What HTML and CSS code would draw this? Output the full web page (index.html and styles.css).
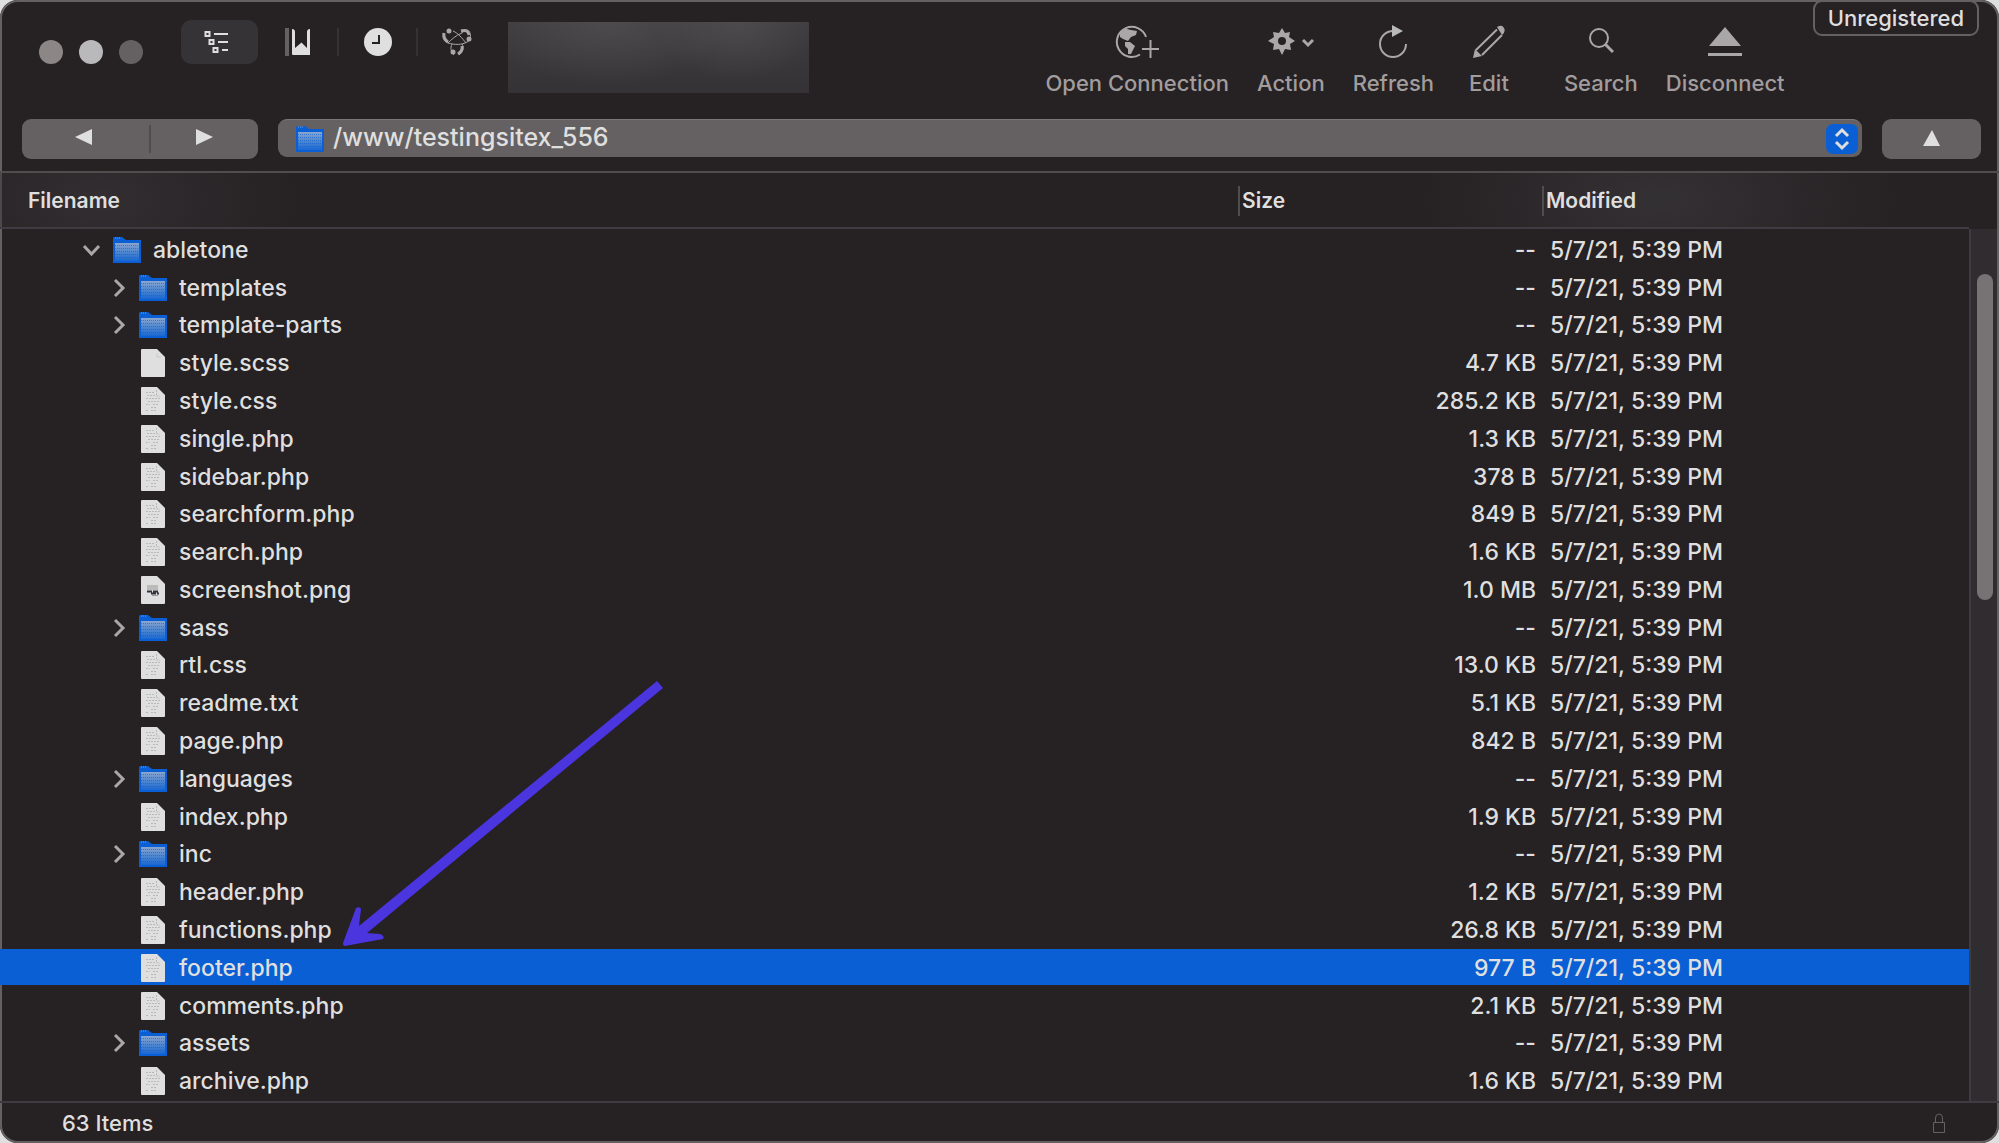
FILE: index.html
```html
<!DOCTYPE html>
<html lang="en">
<head>
<meta charset="utf-8">
<title>/www/testingsitex_556</title>
<link rel="stylesheet" href="styles.css">
</head>
<body>
<svg class="defs" aria-hidden="true">
  <defs>
    <linearGradient id="folder-face" x1="0" y1="0" x2="0" y2="1">
      <stop offset="0" stop-color="#8ba6cf"/>
      <stop offset="0.5" stop-color="#4f87cf"/>
      <stop offset="1" stop-color="#1a67d2"/>
    </linearGradient>
    <symbol id="folder" viewBox="0 0 28 26">
      <path d="M0 1.500Q0 0 1.500 0H9L13 3H28V26H0Z" fill="#0a5fd4"/>
      <path d="M2 1H8" stroke="#7fa3d6" stroke-dasharray="1 1"/>
      <path d="M2 6H26V24H2Z" fill="url(#folder-face)"/>
      <path d="M2 8.500H26M2 11.500H26M2 14.500H26M2 17.500H26M2 20.500H26" stroke="#0a5fd4" stroke-dasharray="1 1" opacity="0.6"/>
    </symbol>
    <symbol id="blank" viewBox="0 0 28 28">
      <path d="M2 1Q2 0 3 0H18L26 8V27Q26 28 25 28H3Q2 28 2 27Z" fill="#dfdfdf"/>
      <path d="M18 4.500V8H22" fill="none" stroke="#c8c8c8"/>
    </symbol>
    <symbol id="file" viewBox="0 0 28 28">
      <path d="M2 1Q2 0 3 0H18L26 8V27Q26 28 25 28H3Q2 28 2 27Z" fill="#dfdfdf"/>
      <path d="M17.500 3V9H21M7 5.500H15M8 8.500H16M7 11.500H21M9 14.500H20M7 17.500H11M14 17.500H20M12 20.500H17M7 23.500H9M12 23.500H18" fill="none" stroke="#b9b8ba" stroke-dasharray="2 1"/>
    </symbol>
    <symbol id="image" viewBox="0 0 28 28">
      <path d="M2 1Q2 0 3 0H18L26 8V27Q26 28 25 28H3Q2 28 2 27Z" fill="#dfdfdf"/>
      <path d="M8 9H19V14H8Z" fill="#bbb"/>
      <path d="M8 15.500H19M12 17.500H20" stroke="#33333a" stroke-width="2" stroke-dasharray="5 1"/>
      <path d="M13 19.500H19" stroke="#999"/>
    </symbol>
    <symbol id="closed" viewBox="0 0 22 22">
      <path d="M9 3L17 11L9 19" fill="none" stroke="#aaa7a8" stroke-width="3"/>
    </symbol>
    <symbol id="opened" viewBox="0 0 22 22">
      <path d="M4 7L11.500 15L19 7" fill="none" stroke="#aaa7a8" stroke-width="3"/>
    </symbol>
  </defs>
</svg>

<div class="window">
  <header class="chrome">
    <div class="toolbar">
      <div class="lights">
        <button class="light light-close" aria-label="Close"></button>
        <button class="light light-min" aria-label="Minimize"></button>
        <button class="light light-zoom" aria-label="Zoom"></button>
      </div>
      <nav class="views">
        <button class="view view-active" aria-label="Browser">
          <svg width="24" height="24" viewBox="0 0 24 24" fill="none" stroke="#dfdfdf" stroke-width="2"><path d="M1.500 2H5.500V6H1.500ZM5.500 10H9.500V14H5.500ZM9.500 18H13.500V22H9.500ZM10 4H24M14 12H24M18 20H24"/></svg>
        </button>
        <button class="view" aria-label="Bookmarks">
          <svg width="26" height="28" viewBox="0 0 26 28"><path d="M0 0H4V28H0Z" fill="#656162"/><path d="M7 1Q10 1 10 4V20L16.500 14.500L22 20V4Q22 1 25 1V27H8Q7 27 7 26Z" fill="#dfdfdf"/></svg>
        </button>
        <button class="view" aria-label="History">
          <svg width="28" height="28" viewBox="0 0 28 28"><circle cx="14" cy="14" r="14" fill="#dfdfdf"/><path d="M15 7V15H8" fill="none" stroke="#262123" stroke-width="2"/></svg>
        </button>
        <button class="view" aria-label="Bonjour">
          <svg width="30" height="28" viewBox="0 0 30 28" fill="none" stroke="#aaa7a8" stroke-width="2"><path d="M11 3C16 5 20 10 24 15M20 5C14 7 9 12 6 15M6 15C13 17 20 17 25 14M20 5C22 2 25 1 27 3C30 8 28 13 25 14M6 15C2 13 0 9 2 5M10 16C8 20 9 24 12 27M20 16C22 20 21 24 17 27" stroke-width="1"/><path d="M2 5Q1 11 6 14M19 3Q26 1 27 7M16 26Q21 23 20 18" stroke-width="3"/><circle cx="7" cy="3" r="2.500" fill="#aaa7a8" stroke="none"/><circle cx="27" cy="11" r="2.500" fill="#aaa7a8" stroke="none"/><circle cx="11" cy="24" r="2.500" fill="#aaa7a8" stroke="none"/></svg>
        </button>
      </nav>
      <div class="title-shade"></div>
      <div class="actions">
        <button class="action">
          <svg width="44" height="34" viewBox="0 0 44 34" fill="none" stroke="#aaa7a8" stroke-width="2"><path d="M31 12A15 15 0 1 0 25 29.500"/><path d="M27 24H44M35.500 15V33"/><path d="M5 8L10 3.500L16 5L22 6L21 10L16 12L13 16L8 14L5 12ZM10 17L15 17L20 21L18 25L16 29L13 29L13 24L10 21Z" fill="#aaa7a8" stroke="none"/></svg>
          <span>Open Connection</span>
        </button>
        <button class="action">
          <svg width="46" height="34" viewBox="0 0 46 34"><path fill-rule="evenodd" fill="#aaa7a8" d="M14 3L17 8L22 7L21 12L27 16L22 19L23 25L17 24L14 30L11 24L5 25L6 19L0 16L6 12L5 7L11 8ZM14 12A4 4 0 1 0 14 20A4 4 0 1 0 14 12Z"/><path d="M35 15L40 20L45 15" fill="none" stroke="#aaa7a8" stroke-width="3"/></svg>
          <span>Action</span>
        </button>
        <button class="action">
          <svg width="30" height="34" viewBox="0 0 30 34"><path d="M15 6A13 13 0 1 0 28 19" fill="none" stroke="#aaa7a8" stroke-width="2"/><path d="M14 0L25 6L14 12Z" fill="#b9b8ba"/></svg>
          <span>Refresh</span>
        </button>
        <button class="action action-edit">
          <svg width="34" height="34" viewBox="0 0 34 34"><path d="M4 25L25 4.500M10 30L30 10" fill="none" stroke="#aaa7a8" stroke-width="2"/><path d="M3 24L10 31L1 33ZM25 2Q30 -1 32 3Q34 7 30 10Z" fill="#aaa7a8"/></svg>
          <span>Edit</span>
        </button>
        <button class="action action-search">
          <svg width="26" height="34" viewBox="0 0 26 34" fill="none" stroke="#aaa7a8"><circle cx="11" cy="13" r="9" stroke-width="2"/><path d="M17 19L25 27" stroke-width="3"/></svg>
          <span>Search</span>
        </button>
        <button class="action">
          <svg width="34" height="34" viewBox="0 0 34 34" fill="#aaa7a8"><path d="M17 2L33 21H1ZM0 28H34V31H0Z"/></svg>
          <span>Disconnect</span>
        </button>
      </div>
      <button class="unregistered">Unregistered</button>
    </div>

    <div class="location">
      <div class="history">
        <button class="back" aria-label="Back"><svg width="17" height="16" viewBox="0 0 17 16"><path d="M17 0V16L0 8Z" fill="#dfdfdf"/></svg></button>
        <button class="forward" aria-label="Forward"><svg width="17" height="16" viewBox="0 0 17 16"><path d="M0 0V16L17 8Z" fill="#dfdfdf"/></svg></button>
      </div>
      <div class="path">
        <svg width="28" height="26"><use href="#folder"/></svg>
        <select aria-label="Path"><option>/www/testingsitex_556</option></select>
        <svg class="stepper" width="32" height="30" viewBox="0 0 32 30"><rect width="32" height="30" rx="7" fill="#0a5fd4"/><path d="M10 12L16 6L22 12M10 18L16 24L22 18" fill="none" stroke="#dfdfdf" stroke-width="3"/></svg>
      </div>
      <button class="up" aria-label="Parent folder"><svg width="17" height="16" viewBox="0 0 17 16"><path d="M0 16H17L9 0Z" fill="#dfdfdf"/></svg></button>
    </div>
  </header>

  <main class="browser">
    <table class="files">
      <thead>
        <tr><th>Filename</th><th>Size</th><th>Modified</th></tr>
      </thead>
      <tbody>
        <tr class="root"><td><button class="twist" aria-label="Collapse"><svg><use href="#opened"/></svg></button><svg class="icon"><use href="#folder"/></svg>abletone</td><td>--</td><td>5/7/21, 5:39 PM</td></tr>
        <tr><td><button class="twist" aria-label="Expand"><svg><use href="#closed"/></svg></button><svg class="icon"><use href="#folder"/></svg>templates</td><td>--</td><td>5/7/21, 5:39 PM</td></tr>
        <tr><td><button class="twist" aria-label="Expand"><svg><use href="#closed"/></svg></button><svg class="icon"><use href="#folder"/></svg>template-parts</td><td>--</td><td>5/7/21, 5:39 PM</td></tr>
        <tr><td><span class="twist"></span><svg class="icon"><use href="#blank"/></svg>style.scss</td><td>4.7 KB</td><td>5/7/21, 5:39 PM</td></tr>
        <tr><td><span class="twist"></span><svg class="icon"><use href="#file"/></svg>style.css</td><td>285.2 KB</td><td>5/7/21, 5:39 PM</td></tr>
        <tr><td><span class="twist"></span><svg class="icon"><use href="#file"/></svg>single.php</td><td>1.3 KB</td><td>5/7/21, 5:39 PM</td></tr>
        <tr><td><span class="twist"></span><svg class="icon"><use href="#file"/></svg>sidebar.php</td><td>378 B</td><td>5/7/21, 5:39 PM</td></tr>
        <tr><td><span class="twist"></span><svg class="icon"><use href="#file"/></svg>searchform.php</td><td>849 B</td><td>5/7/21, 5:39 PM</td></tr>
        <tr><td><span class="twist"></span><svg class="icon"><use href="#file"/></svg>search.php</td><td>1.6 KB</td><td>5/7/21, 5:39 PM</td></tr>
        <tr><td><span class="twist"></span><svg class="icon"><use href="#image"/></svg>screenshot.png</td><td>1.0 MB</td><td>5/7/21, 5:39 PM</td></tr>
        <tr><td><button class="twist" aria-label="Expand"><svg><use href="#closed"/></svg></button><svg class="icon"><use href="#folder"/></svg>sass</td><td>--</td><td>5/7/21, 5:39 PM</td></tr>
        <tr><td><span class="twist"></span><svg class="icon"><use href="#file"/></svg>rtl.css</td><td>13.0 KB</td><td>5/7/21, 5:39 PM</td></tr>
        <tr><td><span class="twist"></span><svg class="icon"><use href="#file"/></svg>readme.txt</td><td>5.1 KB</td><td>5/7/21, 5:39 PM</td></tr>
        <tr><td><span class="twist"></span><svg class="icon"><use href="#file"/></svg>page.php</td><td>842 B</td><td>5/7/21, 5:39 PM</td></tr>
        <tr><td><button class="twist" aria-label="Expand"><svg><use href="#closed"/></svg></button><svg class="icon"><use href="#folder"/></svg>languages</td><td>--</td><td>5/7/21, 5:39 PM</td></tr>
        <tr><td><span class="twist"></span><svg class="icon"><use href="#file"/></svg>index.php</td><td>1.9 KB</td><td>5/7/21, 5:39 PM</td></tr>
        <tr><td><button class="twist" aria-label="Expand"><svg><use href="#closed"/></svg></button><svg class="icon"><use href="#folder"/></svg>inc</td><td>--</td><td>5/7/21, 5:39 PM</td></tr>
        <tr><td><span class="twist"></span><svg class="icon"><use href="#file"/></svg>header.php</td><td>1.2 KB</td><td>5/7/21, 5:39 PM</td></tr>
        <tr><td><span class="twist"></span><svg class="icon"><use href="#file"/></svg>functions.php</td><td>26.8 KB</td><td>5/7/21, 5:39 PM</td></tr>
        <tr class="selected"><td><span class="twist"></span><svg class="icon"><use href="#file"/></svg>footer.php</td><td>977 B</td><td>5/7/21, 5:39 PM</td></tr>
        <tr><td><span class="twist"></span><svg class="icon"><use href="#file"/></svg>comments.php</td><td>2.1 KB</td><td>5/7/21, 5:39 PM</td></tr>
        <tr><td><button class="twist" aria-label="Expand"><svg><use href="#closed"/></svg></button><svg class="icon"><use href="#folder"/></svg>assets</td><td>--</td><td>5/7/21, 5:39 PM</td></tr>
        <tr><td><span class="twist"></span><svg class="icon"><use href="#file"/></svg>archive.php</td><td>1.6 KB</td><td>5/7/21, 5:39 PM</td></tr>
      </tbody>
    </table>
    <div class="scrollbar"><div class="thumb"></div></div>
    <svg class="pointer" width="322" height="268" viewBox="0 0 322 268" aria-hidden="true"><path d="M314 1L320 8L24 253L37 254Q42 256 40 259L2 266Q0 266 0 263L13 228Q17 226 18 229L16 246Z" fill="#4a35df"/></svg>
  </main>

  <footer class="status">
    <span>63 Items</span>
    <svg width="14" height="20" viewBox="0 0 14 20" fill="none" stroke="#656162" stroke-width="1"><path d="M1.500 9.500H12.500V19.500H1.500ZM3.500 9V5Q3.500 1 7 1T10.500 5V9"/></svg>
  </footer>
</div>
</body>
</html>
```
FILE: styles.css
```css
* {
  box-sizing: border-box;
}

body {
  margin: 0;
  background: #dfdfdf;
  color: #dfdfdf;
  font: 500 23px/30px Inter, "Liberation Sans", sans-serif;
}

button,
select {
  margin: 0;
  padding: 0;
  border: 0;
  background: none;
  color: inherit;
  font: inherit;
}

svg {
  display: block;
  flex: none;
}

.defs {
  position: absolute;
  width: 0;
  height: 0;
}

.window {
  display: flex;
  flex-direction: column;
  min-height: 100vh;
  border-radius: 18px;
  background: #262123;
  box-shadow: inset 0 0 0 2px #656162;
  overflow: hidden;
}

/* Toolbar */

.chrome {
  border-bottom: 2px solid #504d4f;
}

.toolbar {
  display: flex;
  align-items: flex-start;
  height: 119px;
  padding: 0 20px 0 39px;
}

.lights {
  display: flex;
  gap: 16px;
  padding-top: 40px;
}

.light {
  width: 24px;
  height: 24px;
  border-radius: 50%;
}

.light-close { background: #8c8687; }
.light-min { background: #b9b8ba; }
.light-zoom { background: #656162; }

.views {
  display: flex;
  align-items: center;
  margin-left: 38px;
  padding-top: 20px;
}

.view {
  display: flex;
  align-items: center;
  justify-content: center;
  width: 79px;
  height: 28px;
}

.view + .view + .view {
  border-left: 2px solid #353235;
}

.view-active {
  width: 77px;
  height: 44px;
  padding-right: 7px;
  border-radius: 10px;
  background: #363337;
}

.title-shade {
  width: 301px;
  height: 71px;
  margin: 22px auto 0 13px;
  background:
    radial-gradient(ellipse 120px 64px at 33% 0, #57545799, transparent),
    radial-gradient(ellipse 80px 60px at 76% 0, #57545799, transparent),
    linear-gradient(#403d41, #353235);
}

.actions {
  display: flex;
  gap: 28px;
  padding-top: 25px;
  color: #a19d9e;
  font-size: 22px;
}

.action {
  display: flex;
  flex-direction: column;
  align-items: center;
  gap: 9px;
}

.action-edit { padding: 0 7px; }
.action-search { margin-left: 20px; }

.unregistered {
  height: 36px;
  margin-left: 28px;
  padding: 0 13px;
  border: 2px solid #656162;
  border-radius: 9px;
  font-size: 22px;
}

.location {
  display: flex;
  gap: 20px;
  height: 52px;
  padding: 0 18px 0 22px;
}

.history,
.up {
  display: flex;
  align-items: center;
  justify-content: center;
  height: 40px;
  border-radius: 9px;
  background: #656162;
}

.history { width: 236px; }

.up {
  width: 99px;
  padding-bottom: 2px;
}

.history button {
  display: flex;
  justify-content: center;
  padding: 4px 0 8px;
}

.history .back {
  flex: 1;
  padding-right: 4px;
}

.history .forward {
  width: 109px;
  border-left: 2px solid #504d4f;
}

.path {
  display: flex;
  flex: 1;
  align-items: center;
  gap: 9px;
  height: 38px;
  padding: 0 4px 0 18px;
  border-top: 1px solid #7a7677;
  border-radius: 9px;
  background: #656162;
}

.path select {
  flex: 1;
  padding-bottom: 4px;
  appearance: none;
  font-size: 25px;
}

/* File list */

.browser {
  position: relative;
  display: flex;
  flex: 1;
}

.files {
  display: flex;
  flex: 1;
  flex-direction: column;
}

.files thead {
  display: block;
  border-bottom: 2px solid #3e3c40;
  background:
    radial-gradient(ellipse 200px 120px at 100px 50%, #322e31, transparent),
    radial-gradient(ellipse 240px 120px at 1660px 50%, #343134, transparent);
}

.files tr {
  display: grid;
  grid-template-columns: 1fr 304px 427px;
  align-items: center;
}

.files thead tr {
  height: 54px;
  padding-top: 2px;
}

.files th {
  padding: 0 2px;
  border-left: 2px solid #504d4f;
  font-size: 21px;
  font-weight: 600;
  text-align: left;
}

.files th:first-child {
  padding-left: 28px;
  border: 0;
}

.files tbody {
  display: grid;
  flex: 1;
  grid-auto-rows: 1fr;
  gap: 2px;
  padding: 2px 0 3px;
}

.files td {
  padding: 2px 6px 0 8px;
}

.files td:first-child {
  display: flex;
  align-items: center;
  padding-left: 106px;
}

.files .root td:first-child {
  padding-left: 80px;
}

.files td:nth-child(2) {
  text-align: right;
}

.files .selected {
  background: #0a5fd4;
}

.twist,
.twist svg {
  width: 22px;
  height: 22px;
}

.icon {
  width: 28px;
  height: 28px;
  margin: 0 12px 0 11px;
}

.scrollbar {
  width: 30px;
  margin-top: 56px;
  padding: 45px 6px 0;
  border-left: 2px solid #3e3c40;
  background: linear-gradient(90deg, #302d30 26px, #656162 26px);
}

.thumb {
  width: 16px;
  height: 326px;
  border-radius: 8px;
  background: #777374;
}

.pointer {
  position: absolute;
  top: 507px;
  left: 343px;
}

/* Status bar */

.status {
  display: flex;
  align-items: center;
  justify-content: space-between;
  height: 42px;
  padding: 0 53px 0 62px;
  border-top: 2px solid #3e3c40;
  font-size: 22px;
}
```
